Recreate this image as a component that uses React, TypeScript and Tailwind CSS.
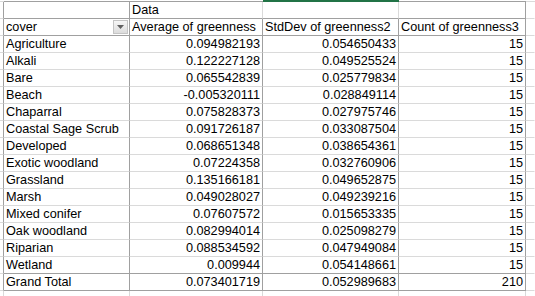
import type { ReactNode } from "react"

const data: [string, string, string, string][] = [
  ["Agriculture", "0.094982193", "0.054650433", "15"],
  ["Alkali", "0.122227128", "0.049525524", "15"],
  ["Bare", "0.065542839", "0.025779834", "15"],
  ["Beach", "-0.005320111", "0.028849114", "15"],
  ["Chaparral", "0.075828373", "0.027975746", "15"],
  ["Coastal Sage Scrub", "0.091726187", "0.033087504", "15"],
  ["Developed", "0.068651348", "0.038654361", "15"],
  ["Exotic woodland", "0.07224358", "0.032760906", "15"],
  ["Grassland", "0.135166181", "0.049652875", "15"],
  ["Marsh", "0.049028027", "0.049239216", "15"],
  ["Mixed conifer", "0.07607572", "0.015653335", "15"],
  ["Oak woodland", "0.082994014", "0.025098279", "15"],
  ["Riparian", "0.088534592", "0.047949084", "15"],
  ["Wetland", "0.009944", "0.054148661", "15"],
]

// pivot borders vs. plain sheet gridlines
const DR = "border-r-[#a0a0a0]"
const LR = "border-r-[#dadada]"
const NR = "border-r-transparent"
const DB = "border-b-[#a0a0a0]"
const LB = "border-b-[#dadada]"

interface CellProps {
  w: string
  r: string
  b: string
  right?: boolean
  children?: ReactNode
}

function Cell({ w, r, b, right, children }: CellProps) {
  return (
    <div
      className={`${w} ${r} ${b} h-[17px] shrink-0 border-r border-b flex items-end overflow-hidden whitespace-nowrap leading-[15px] ${
        right ? "justify-end pr-[2px]" : "pl-[2px]"
      }`}
    >
      {children}
    </div>
  )
}

function FilterButton() {
  return (
    <span className="ml-auto mr-[1px] mb-[1px] w-[15px] h-[14px] shrink-0 flex items-center justify-center border border-[#c4c4c4] bg-gradient-to-b from-[#f6f6f6] to-[#dcdcdc]">
      <svg width="7" height="4" viewBox="0 0 7 4">
        <path d="M0 0h7L3.5 4z" fill="#5f5f5f" />
      </svg>
    </span>
  )
}

function DataRow({ row, last }: { row: [string, string, string, string]; last?: boolean }) {
  const b = last ? DB : LB
  return (
    <div className="flex">
      <Cell w="w-[4px]" r={DR} b={LB} />
      <Cell w="w-[126px]" r={DR} b={b}>{row[0]}</Cell>
      <Cell w="w-[133px]" r={DR} b={b} right>{row[1]}</Cell>
      <Cell w="w-[136px]" r={DR} b={b} right>{row[2]}</Cell>
      <Cell w="w-[127px]" r={DR} b={b} right>{row[3]}</Cell>
      <Cell w="flex-1" r={NR} b={LB} />
    </div>
  )
}

export default function App() {
  return (
    <div className="w-[535px] h-[296px] overflow-hidden bg-white text-black text-[12.7px] font-['Liberation_Sans',Arial,sans-serif]">
      {/* column header edge, column C selected */}
      <div className="flex h-[2px]">
        <div className="w-[4px] shrink-0 border-b border-b-[#dadada]" />
        <div className="w-[126px] shrink-0 border-b border-b-[#a0a0a0]" />
        <div className="w-[133px] shrink-0 border-b border-b-[#a0a0a0]" />
        <div className="w-[136px] shrink-0 bg-[#217346]" />
        <div className="w-[127px] shrink-0 border-b border-b-[#a0a0a0]" />
        <div className="flex-1 border-b border-b-[#dadada]" />
      </div>

      <div className="flex">
        <Cell w="w-[4px]" r={DR} b={LB} />
        <Cell w="w-[126px]" r={DR} b={DB} />
        <Cell w="w-[133px]" r={LR} b={DB}>Data</Cell>
        <Cell w="w-[136px]" r={LR} b={DB} />
        <Cell w="w-[127px]" r={DR} b={DB} />
        <Cell w="flex-1" r={NR} b={LB} />
      </div>

      <div className="flex">
        <Cell w="w-[4px]" r={DR} b={LB} />
        <Cell w="w-[126px]" r={DR} b={DB}>
          <span>cover</span>
          <FilterButton />
        </Cell>
        <Cell w="w-[133px]" r={DR} b={DB}>Average of greenness</Cell>
        <Cell w="w-[136px]" r={DR} b={DB}>StdDev of greenness2</Cell>
        <Cell w="w-[127px]" r={DR} b={DB}>Count of greenness3</Cell>
        <Cell w="flex-1" r={NR} b={LB} />
      </div>

      {data.map((row, i) => (
        <DataRow key={row[0]} row={row} last={i === data.length - 1} />
      ))}

      <DataRow row={["Grand Total", "0.073401719", "0.052989683", "210"]} last />

      <div className="flex">
        <Cell w="w-[4px]" r={LR} b={LB} />
        <Cell w="w-[126px]" r={LR} b={LB} />
        <Cell w="w-[133px]" r={LR} b={LB} />
        <Cell w="w-[136px]" r={LR} b={LB} />
        <Cell w="w-[127px]" r={LR} b={LB} />
        <Cell w="flex-1" r={NR} b={LB} />
      </div>
    </div>
  )
}
